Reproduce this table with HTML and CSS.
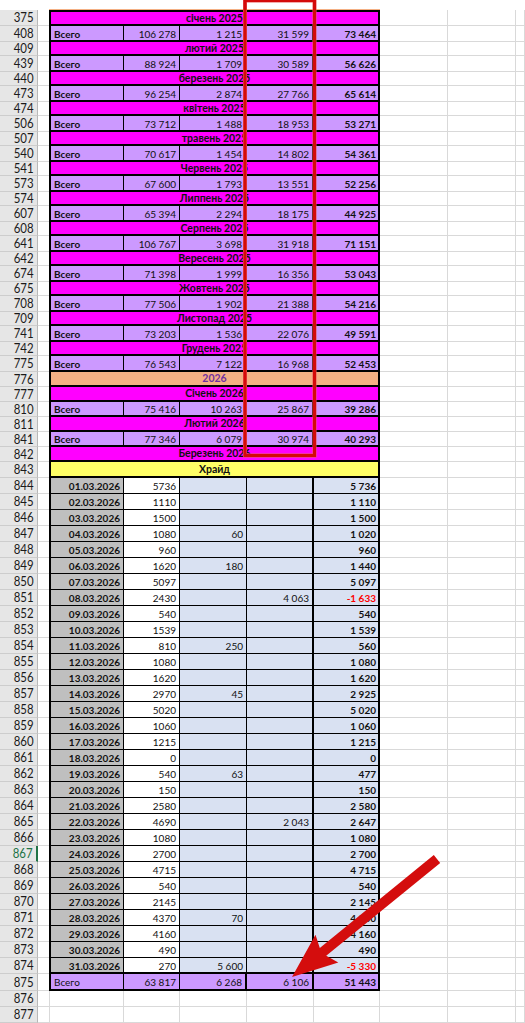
FILE: index.html
```html
<!DOCTYPE html>
<html lang="uk">
<head>
<meta charset="utf-8">
<title>Sheet</title>
<link rel="stylesheet" href="styles.css">
</head>
<body>
<div class="sheet">
  <div class="row strip"><div class="rh blank"></div><div class="gap blank"></div><div class="top5"></div><div class="g blank"></div><div class="g blank"></div><div class="g blank"></div></div>

  <div class="row h16 first"><div class="rh"><span>375</span></div><div class="gap"></div><div class="m">січень 2025</div><div class="g"></div><div class="g"></div><div class="g"></div></div>
  <div class="row h16 t"><div class="rh"><span>408</span></div><div class="gap"></div><div class="c ca">Всего</div><div class="c cb">106 278</div><div class="c cc">1 215</div><div class="c cd">31 599</div><div class="c ce">73 464</div><div class="g"></div><div class="g"></div><div class="g"></div></div>
  <div class="row h14"><div class="rh"><span>409</span></div><div class="gap"></div><div class="m">лютий 2025</div><div class="g"></div><div class="g"></div><div class="g"></div></div>
  <div class="row h16 t"><div class="rh"><span>439</span></div><div class="gap"></div><div class="c ca">Всего</div><div class="c cb">88 924</div><div class="c cc">1 709</div><div class="c cd">30 589</div><div class="c ce">56 626</div><div class="g"></div><div class="g"></div><div class="g"></div></div>
  <div class="row h14"><div class="rh"><span>440</span></div><div class="gap"></div><div class="m">березень 2025</div><div class="g"></div><div class="g"></div><div class="g"></div></div>
  <div class="row h16 t"><div class="rh"><span>473</span></div><div class="gap"></div><div class="c ca">Всего</div><div class="c cb">96 254</div><div class="c cc">2 874</div><div class="c cd">27 766</div><div class="c ce">65 614</div><div class="g"></div><div class="g"></div><div class="g"></div></div>
  <div class="row h14"><div class="rh"><span>474</span></div><div class="gap"></div><div class="m">квітень 2025</div><div class="g"></div><div class="g"></div><div class="g"></div></div>
  <div class="row h16 t"><div class="rh"><span>506</span></div><div class="gap"></div><div class="c ca">Всего</div><div class="c cb">73 712</div><div class="c cc">1 488</div><div class="c cd">18 953</div><div class="c ce">53 271</div><div class="g"></div><div class="g"></div><div class="g"></div></div>
  <div class="row h14"><div class="rh"><span>507</span></div><div class="gap"></div><div class="m">травень 2025</div><div class="g"></div><div class="g"></div><div class="g"></div></div>
  <div class="row h16 t"><div class="rh"><span>540</span></div><div class="gap"></div><div class="c ca">Всего</div><div class="c cb">70 617</div><div class="c cc">1 454</div><div class="c cd">14 802</div><div class="c ce">54 361</div><div class="g"></div><div class="g"></div><div class="g"></div></div>
  <div class="row h14"><div class="rh"><span>541</span></div><div class="gap"></div><div class="m">Червень 2025</div><div class="g"></div><div class="g"></div><div class="g"></div></div>
  <div class="row h16 t"><div class="rh"><span>573</span></div><div class="gap"></div><div class="c ca">Всего</div><div class="c cb">67 600</div><div class="c cc">1 793</div><div class="c cd">13 551</div><div class="c ce">52 256</div><div class="g"></div><div class="g"></div><div class="g"></div></div>
  <div class="row h14"><div class="rh"><span>574</span></div><div class="gap"></div><div class="m">Липпень 2025</div><div class="g"></div><div class="g"></div><div class="g"></div></div>
  <div class="row h16 t"><div class="rh"><span>607</span></div><div class="gap"></div><div class="c ca">Всего</div><div class="c cb">65 394</div><div class="c cc">2 294</div><div class="c cd">18 175</div><div class="c ce">44 925</div><div class="g"></div><div class="g"></div><div class="g"></div></div>
  <div class="row h14"><div class="rh"><span>608</span></div><div class="gap"></div><div class="m">Серпень 2025</div><div class="g"></div><div class="g"></div><div class="g"></div></div>
  <div class="row h16 t"><div class="rh"><span>641</span></div><div class="gap"></div><div class="c ca">Всего</div><div class="c cb">106 767</div><div class="c cc">3 698</div><div class="c cd">31 918</div><div class="c ce">71 151</div><div class="g"></div><div class="g"></div><div class="g"></div></div>
  <div class="row h14"><div class="rh"><span>642</span></div><div class="gap"></div><div class="m">Вересень 2025</div><div class="g"></div><div class="g"></div><div class="g"></div></div>
  <div class="row h16 t"><div class="rh"><span>674</span></div><div class="gap"></div><div class="c ca">Всего</div><div class="c cb">71 398</div><div class="c cc">1 999</div><div class="c cd">16 356</div><div class="c ce">53 043</div><div class="g"></div><div class="g"></div><div class="g"></div></div>
  <div class="row h14"><div class="rh"><span>675</span></div><div class="gap"></div><div class="m">Жовтень 2025</div><div class="g"></div><div class="g"></div><div class="g"></div></div>
  <div class="row h16 t"><div class="rh"><span>708</span></div><div class="gap"></div><div class="c ca">Всего</div><div class="c cb">77 506</div><div class="c cc">1 902</div><div class="c cd">21 388</div><div class="c ce">54 216</div><div class="g"></div><div class="g"></div><div class="g"></div></div>
  <div class="row h14"><div class="rh"><span>709</span></div><div class="gap"></div><div class="m">Листопад 2025</div><div class="g"></div><div class="g"></div><div class="g"></div></div>
  <div class="row h16 t"><div class="rh"><span>741</span></div><div class="gap"></div><div class="c ca">Всего</div><div class="c cb">73 203</div><div class="c cc">1 536</div><div class="c cd">22 076</div><div class="c ce">49 591</div><div class="g"></div><div class="g"></div><div class="g"></div></div>
  <div class="row h14"><div class="rh"><span>742</span></div><div class="gap"></div><div class="m">Грудень 2025</div><div class="g"></div><div class="g"></div><div class="g"></div></div>
  <div class="row h16 t"><div class="rh"><span>775</span></div><div class="gap"></div><div class="c ca">Всего</div><div class="c cb">76 543</div><div class="c cc">7 122</div><div class="c cd">16 968</div><div class="c ce">52 453</div><div class="g"></div><div class="g"></div><div class="g"></div></div>

  <div class="row h15"><div class="rh"><span>776</span></div><div class="gap"></div><div class="m year">2026</div><div class="g"></div><div class="g"></div><div class="g"></div></div>
  <div class="row h15"><div class="rh"><span>777</span></div><div class="gap"></div><div class="m">Січень 2026</div><div class="g"></div><div class="g"></div><div class="g"></div></div>
  <div class="row h15 t"><div class="rh"><span>810</span></div><div class="gap"></div><div class="c ca">Всего</div><div class="c cb">75 416</div><div class="c cc">10 263</div><div class="c cd">25 867</div><div class="c ce">39 286</div><div class="g"></div><div class="g"></div><div class="g"></div></div>
  <div class="row h15"><div class="rh"><span>811</span></div><div class="gap"></div><div class="m">Лютий 2026</div><div class="g"></div><div class="g"></div><div class="g"></div></div>
  <div class="row h15 t"><div class="rh"><span>841</span></div><div class="gap"></div><div class="c ca">Всего</div><div class="c cb">77 346</div><div class="c cc">6 079</div><div class="c cd">30 974</div><div class="c ce">40 293</div><div class="g"></div><div class="g"></div><div class="g"></div></div>
  <div class="row h15"><div class="rh"><span>842</span></div><div class="gap"></div><div class="m">Березень 2026</div><div class="g"></div><div class="g"></div><div class="g"></div></div>
  <div class="row h16"><div class="rh"><span>843</span></div><div class="gap"></div><div class="m shop">Храйд</div><div class="g"></div><div class="g"></div><div class="g"></div></div>

  <div class="row h16 d"><div class="rh"><span>844</span></div><div class="gap"></div><div class="c ca">01.03.2026</div><div class="c cb">5736</div><div class="c cc"></div><div class="c cd"></div><div class="c ce">5 736</div><div class="g"></div><div class="g"></div><div class="g"></div></div>
  <div class="row h16 d"><div class="rh"><span>845</span></div><div class="gap"></div><div class="c ca">02.03.2026</div><div class="c cb">1110</div><div class="c cc"></div><div class="c cd"></div><div class="c ce">1 110</div><div class="g"></div><div class="g"></div><div class="g"></div></div>
  <div class="row h16 d"><div class="rh"><span>846</span></div><div class="gap"></div><div class="c ca">03.03.2026</div><div class="c cb">1500</div><div class="c cc"></div><div class="c cd"></div><div class="c ce">1 500</div><div class="g"></div><div class="g"></div><div class="g"></div></div>
  <div class="row h16 d"><div class="rh"><span>847</span></div><div class="gap"></div><div class="c ca">04.03.2026</div><div class="c cb">1080</div><div class="c cc">60</div><div class="c cd"></div><div class="c ce">1 020</div><div class="g"></div><div class="g"></div><div class="g"></div></div>
  <div class="row h16 d"><div class="rh"><span>848</span></div><div class="gap"></div><div class="c ca">05.03.2026</div><div class="c cb">960</div><div class="c cc"></div><div class="c cd"></div><div class="c ce">960</div><div class="g"></div><div class="g"></div><div class="g"></div></div>
  <div class="row h16 d"><div class="rh"><span>849</span></div><div class="gap"></div><div class="c ca">06.03.2026</div><div class="c cb">1620</div><div class="c cc">180</div><div class="c cd"></div><div class="c ce">1 440</div><div class="g"></div><div class="g"></div><div class="g"></div></div>
  <div class="row h16 d"><div class="rh"><span>850</span></div><div class="gap"></div><div class="c ca">07.03.2026</div><div class="c cb">5097</div><div class="c cc"></div><div class="c cd"></div><div class="c ce">5 097</div><div class="g"></div><div class="g"></div><div class="g"></div></div>
  <div class="row h16 d"><div class="rh"><span>851</span></div><div class="gap"></div><div class="c ca">08.03.2026</div><div class="c cb">2430</div><div class="c cc"></div><div class="c cd">4 063</div><div class="c ce neg">-1 633</div><div class="g"></div><div class="g"></div><div class="g"></div></div>
  <div class="row h16 d"><div class="rh"><span>852</span></div><div class="gap"></div><div class="c ca">09.03.2026</div><div class="c cb">540</div><div class="c cc"></div><div class="c cd"></div><div class="c ce">540</div><div class="g"></div><div class="g"></div><div class="g"></div></div>
  <div class="row h16 d"><div class="rh"><span>853</span></div><div class="gap"></div><div class="c ca">10.03.2026</div><div class="c cb">1539</div><div class="c cc"></div><div class="c cd"></div><div class="c ce">1 539</div><div class="g"></div><div class="g"></div><div class="g"></div></div>
  <div class="row h16 d"><div class="rh"><span>854</span></div><div class="gap"></div><div class="c ca">11.03.2026</div><div class="c cb">810</div><div class="c cc">250</div><div class="c cd"></div><div class="c ce">560</div><div class="g"></div><div class="g"></div><div class="g"></div></div>
  <div class="row h16 d"><div class="rh"><span>855</span></div><div class="gap"></div><div class="c ca">12.03.2026</div><div class="c cb">1080</div><div class="c cc"></div><div class="c cd"></div><div class="c ce">1 080</div><div class="g"></div><div class="g"></div><div class="g"></div></div>
  <div class="row h16 d"><div class="rh"><span>856</span></div><div class="gap"></div><div class="c ca">13.03.2026</div><div class="c cb">1620</div><div class="c cc"></div><div class="c cd"></div><div class="c ce">1 620</div><div class="g"></div><div class="g"></div><div class="g"></div></div>
  <div class="row h16 d"><div class="rh"><span>857</span></div><div class="gap"></div><div class="c ca">14.03.2026</div><div class="c cb">2970</div><div class="c cc">45</div><div class="c cd"></div><div class="c ce">2 925</div><div class="g"></div><div class="g"></div><div class="g"></div></div>
  <div class="row h16 d"><div class="rh"><span>858</span></div><div class="gap"></div><div class="c ca">15.03.2026</div><div class="c cb">5020</div><div class="c cc"></div><div class="c cd"></div><div class="c ce">5 020</div><div class="g"></div><div class="g"></div><div class="g"></div></div>
  <div class="row h16 d"><div class="rh"><span>859</span></div><div class="gap"></div><div class="c ca">16.03.2026</div><div class="c cb">1060</div><div class="c cc"></div><div class="c cd"></div><div class="c ce">1 060</div><div class="g"></div><div class="g"></div><div class="g"></div></div>
  <div class="row h16 d"><div class="rh"><span>860</span></div><div class="gap"></div><div class="c ca">17.03.2026</div><div class="c cb">1215</div><div class="c cc"></div><div class="c cd"></div><div class="c ce">1 215</div><div class="g"></div><div class="g"></div><div class="g"></div></div>
  <div class="row h16 d"><div class="rh"><span>861</span></div><div class="gap"></div><div class="c ca">18.03.2026</div><div class="c cb">0</div><div class="c cc"></div><div class="c cd"></div><div class="c ce">0</div><div class="g"></div><div class="g"></div><div class="g"></div></div>
  <div class="row h16 d"><div class="rh"><span>862</span></div><div class="gap"></div><div class="c ca">19.03.2026</div><div class="c cb">540</div><div class="c cc">63</div><div class="c cd"></div><div class="c ce">477</div><div class="g"></div><div class="g"></div><div class="g"></div></div>
  <div class="row h16 d"><div class="rh"><span>863</span></div><div class="gap"></div><div class="c ca">20.03.2026</div><div class="c cb">150</div><div class="c cc"></div><div class="c cd"></div><div class="c ce">150</div><div class="g"></div><div class="g"></div><div class="g"></div></div>
  <div class="row h16 d"><div class="rh"><span>864</span></div><div class="gap"></div><div class="c ca">21.03.2026</div><div class="c cb">2580</div><div class="c cc"></div><div class="c cd"></div><div class="c ce">2 580</div><div class="g"></div><div class="g"></div><div class="g"></div></div>
  <div class="row h16 d"><div class="rh"><span>865</span></div><div class="gap"></div><div class="c ca">22.03.2026</div><div class="c cb">4690</div><div class="c cc"></div><div class="c cd">2 043</div><div class="c ce">2 647</div><div class="g"></div><div class="g"></div><div class="g"></div></div>
  <div class="row h16 d"><div class="rh"><span>866</span></div><div class="gap"></div><div class="c ca">23.03.2026</div><div class="c cb">1080</div><div class="c cc"></div><div class="c cd"></div><div class="c ce">1 080</div><div class="g"></div><div class="g"></div><div class="g"></div></div>
  <div class="row h16 d"><div class="rh active"><span>867</span></div><div class="gap"></div><div class="c ca">24.03.2026</div><div class="c cb">2700</div><div class="c cc"></div><div class="c cd"></div><div class="c ce">2 700</div><div class="g"></div><div class="g"></div><div class="g"></div></div>
  <div class="row h16 d"><div class="rh"><span>868</span></div><div class="gap"></div><div class="c ca">25.03.2026</div><div class="c cb">4715</div><div class="c cc"></div><div class="c cd"></div><div class="c ce">4 715</div><div class="g"></div><div class="g"></div><div class="g"></div></div>
  <div class="row h16 d"><div class="rh"><span>869</span></div><div class="gap"></div><div class="c ca">26.03.2026</div><div class="c cb">540</div><div class="c cc"></div><div class="c cd"></div><div class="c ce">540</div><div class="g"></div><div class="g"></div><div class="g"></div></div>
  <div class="row h16 d"><div class="rh"><span>870</span></div><div class="gap"></div><div class="c ca">27.03.2026</div><div class="c cb">2145</div><div class="c cc"></div><div class="c cd"></div><div class="c ce">2 145</div><div class="g"></div><div class="g"></div><div class="g"></div></div>
  <div class="row h16 d"><div class="rh"><span>871</span></div><div class="gap"></div><div class="c ca">28.03.2026</div><div class="c cb">4370</div><div class="c cc">70</div><div class="c cd"></div><div class="c ce">4 300</div><div class="g"></div><div class="g"></div><div class="g"></div></div>
  <div class="row h16 d"><div class="rh"><span>872</span></div><div class="gap"></div><div class="c ca">29.03.2026</div><div class="c cb">4160</div><div class="c cc"></div><div class="c cd"></div><div class="c ce">4 160</div><div class="g"></div><div class="g"></div><div class="g"></div></div>
  <div class="row h16 d"><div class="rh"><span>873</span></div><div class="gap"></div><div class="c ca">30.03.2026</div><div class="c cb">490</div><div class="c cc"></div><div class="c cd"></div><div class="c ce">490</div><div class="g"></div><div class="g"></div><div class="g"></div></div>
  <div class="row h16 d last"><div class="rh"><span>874</span></div><div class="gap"></div><div class="c ca">31.03.2026</div><div class="c cb">270</div><div class="c cc">5 600</div><div class="c cd"></div><div class="c ce neg">-5 330</div><div class="g"></div><div class="g"></div><div class="g"></div></div>
  <div class="row h17 t sum"><div class="rh"><span>875</span></div><div class="gap"></div><div class="c ca">Всего</div><div class="c cb">63 817</div><div class="c cc">6 268</div><div class="c cd">6 106</div><div class="c ce">51 443</div><div class="g"></div><div class="g"></div><div class="g"></div></div>

  <div class="row h16 e"><div class="rh"><span>876</span></div><div class="gap"></div><div class="c ca"></div><div class="c cb"></div><div class="c cc"></div><div class="c cd"></div><div class="c ce"></div><div class="g"></div><div class="g"></div><div class="g"></div></div>
  <div class="row h16 e"><div class="rh"><span>877</span></div><div class="gap"></div><div class="c ca"></div><div class="c cb"></div><div class="c cc"></div><div class="c cd"></div><div class="c ce"></div><div class="g"></div><div class="g"></div><div class="g"></div></div>

  <svg class="overlay" width="525" height="1023" viewBox="0 0 525 1023" aria-hidden="true">
    <rect x="245" y="0.5" width="69.5" height="455" fill="none" stroke="#e85a5a" stroke-width="4"/>
    <rect x="245" y="0.5" width="69.5" height="455" fill="none" stroke="#d40a0a" stroke-width="3"/>
    <polygon points="433.8,855.1 319.8,947.9 315.5,934.7 292,977 338.3,962.5 326.2,955.7 440.2,862.9" fill="#d40d0d"/>
  </svg>
</div>
</body>
</html>
```

FILE: styles.css
```css
html, body {
  margin: 0;
  padding: 0;
  background: #ffffff;
}

.sheet {
  position: relative;
  width: 525px;
  height: 1023px;
  overflow: hidden;
  font-family: "Lato", "Liberation Sans", sans-serif;
  font-size: 10px;
  color: #111;
}

.row {
  display: grid;
  grid-template-columns: 38px 11px 75px 56px 67px 67px 66px 68px 68px 1fr;
}

.h14 { height: 14px; }
.h15 { height: 15px; }
.h16 { height: 16px; }
.h17 { height: 17px; }

.strip { height: 10px; }
.strip .top5 {
  grid-column: span 5;
  border-bottom: 1px solid #f4b084;
}
.blank { background: #fff; }

/* row header */
.rh {
  box-sizing: border-box;
  background: #e6e6e6;
  border-right: 1px solid #b8b8b8;
  border-bottom: 1px solid #cdcdcd;
  display: flex;
  align-items: center;
  justify-content: flex-end;
  padding-right: 3px;
  font-size: 13px;
  color: #1a1a1a;
  line-height: 1;
}
.rh span {
  display: inline-block;
  transform: scaleX(0.88);
  transform-origin: right center;
}
.strip .rh.blank {
  background: #fff;
  border: none;
}
.rh.active {
  color: #217346;
  border-right: 2px solid #217346;
}

.gap, .g {
  box-sizing: border-box;
  border-bottom: 1px solid #d9d9d9;
}
.g { border-right: 1px solid #d9d9d9; }
.strip .gap, .strip .g { border: none; }

/* merged header rows */
.m {
  grid-column: span 5;
  box-sizing: border-box;
  background: #ff00ff;
  border-left: 2px solid #000;
  border-right: 2px solid #000;
  border-bottom: 2px solid #000;
  display: flex;
  align-items: center;
  justify-content: center;
  font-weight: 700;
  font-size: 10.5px;
  line-height: 1;
}
.first .m { border-top: 2px solid #000; }
.m.year { background: #f4b084; color: #7030a0; }
.m.shop { background: #ffff66; }

/* table cells */
.c {
  box-sizing: border-box;
  display: flex;
  align-items: center;
  justify-content: flex-end;
  padding: 1px 3px 0;
  line-height: 1;
  white-space: nowrap;
  border-bottom: 2px solid #000;
}
.ca { border-left: 2px solid #000; border-right: 1px solid #000; }
.cb { border-right: 1px solid #000; }
.cc { border-right: 2px solid #000; }
.cd { border-right: 2px solid #000; }
.ce { border-right: 2px solid #000; font-weight: 700; padding-right: 2px; }

/* total rows */
.t .c { background: #cc99ff; }
.t .ca { justify-content: flex-start; font-weight: 700; }
.sum .ca { font-weight: 400; }

/* daily data rows */
.d .c { border-bottom-width: 1px; background: #d9e1f2; }
.d .ca { background: #bfbfbf; font-weight: 700; }
.d .cb { background: #ffffff; }
.d .cc { border-right-width: 1px; }
.d.last .c { border-bottom-width: 2px; }
.neg { color: #ff0000; }

/* empty rows below the table */
.e .c {
  border-bottom: 1px solid #d9d9d9;
  border-right: 1px solid #d9d9d9;
}
.e .ca { border-left: 1px solid #d9d9d9; }

.overlay {
  position: absolute;
  left: 0;
  top: 0;
  pointer-events: none;
}
```
